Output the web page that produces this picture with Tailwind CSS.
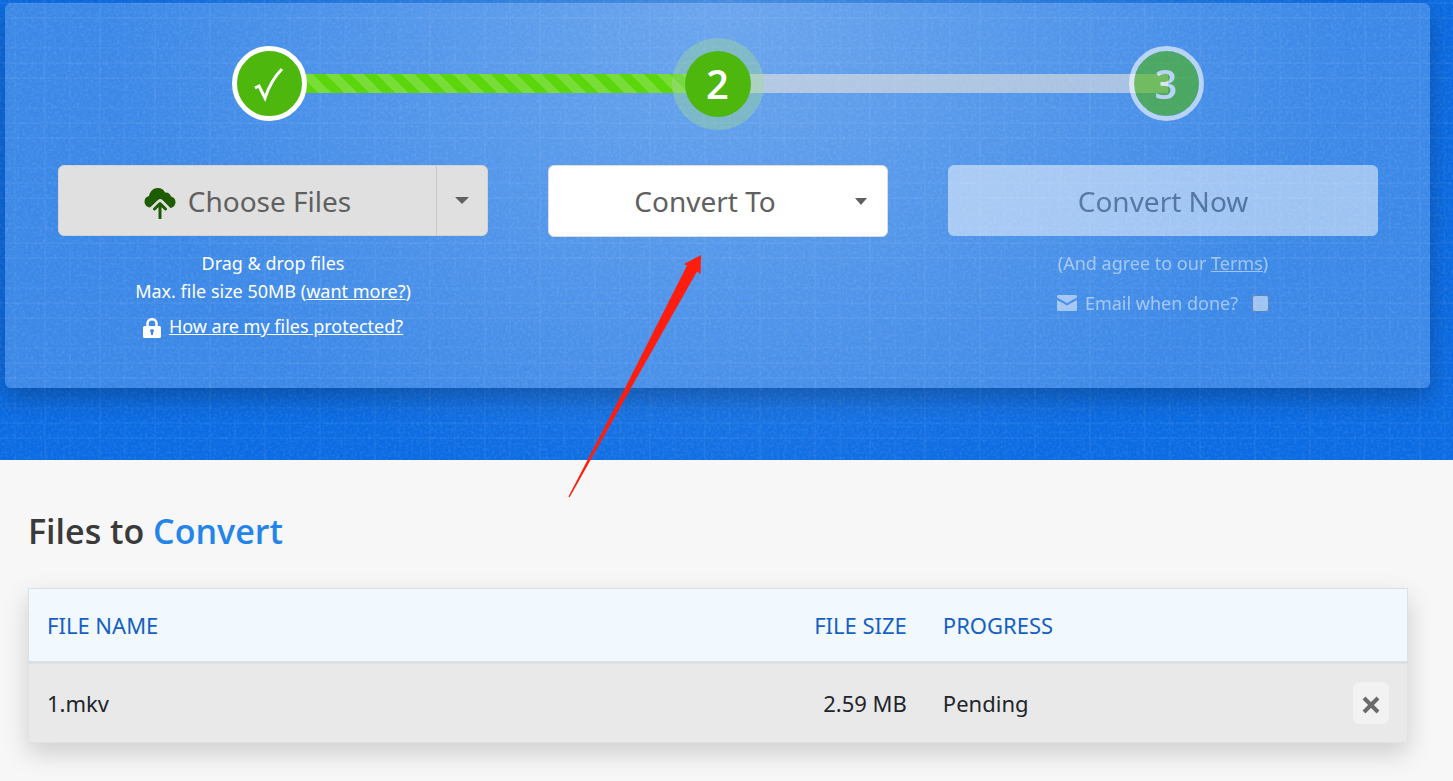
<!DOCTYPE html>
<html lang="en">
<head>
    <meta charset="UTF-8">
    <meta name="viewport" content="width=device-width, initial-scale=1.0">
    <title>File Converter</title>
    <script src="https://cdn.jsdelivr.net/npm/@tailwindcss/browser@4"></script>
</head>
<body class="relative min-h-screen bg-[#f7f7f7] font-['Noto_Sans','Open_Sans',sans-serif] text-[#212529]">
    <!-- Converter -->
    <section class="relative isolate overflow-hidden bg-[#0b6be2] pt-[3px] pr-[23px] pb-[72px] pl-[5px]">
        <!-- Backdrop: glow, grid and grain -->
        <div class="absolute inset-0 -z-10 bg-[radial-gradient(ellipse_620px_520px_at_50%_0%,rgba(255,255,255,0.25),transparent)]"></div>
        <svg class="absolute inset-0 -z-10 h-full w-full" aria-hidden="true">
            <defs>
                <pattern id="grid" x="44" y="17" width="55" height="60" patternUnits="userSpaceOnUse">
                    <path d="M1 0V60M0 1H55M0 46H55" stroke="#fff" stroke-width="2" stroke-opacity=".04" />
                    <path d="M26 0V60M0 31H55" stroke="#fff" stroke-width="2" stroke-opacity=".025" />
                </pattern>
                <filter id="grain" x="0" y="0" width="100%" height="100%">
                    <feTurbulence type="fractalNoise" baseFrequency=".35" numOctaves="2" seed="4" />
                    <feColorMatrix values="0 0 0 0 1  0 0 0 0 1  0 0 0 0 1  .5 0 0 0 -.2" />
                </filter>
            </defs>
            <rect width="100%" height="100%" filter="url(#grain)" opacity=".4" />
            <rect width="100%" height="100%" fill="url(#grid)" />
        </svg>

        <div class="rounded-md bg-white/20 pt-[43px] pb-12 shadow-[0_10px_24px_rgba(0,0,0,0.25)]">
            <!-- Steps -->
            <div class="mx-auto max-w-[972px]">
                <ol class="relative flex items-center justify-between font-['Open_Sans','Noto_Sans',sans-serif] text-[40px] font-semibold text-white">
                    <li class="absolute inset-x-9 h-[19px] bg-[#e8e2de]/60" aria-hidden="true">
                        <div class="h-full w-1/2 bg-[#5bd60c] bg-[repeating-linear-gradient(45deg,rgba(255,255,255,0.18)_0_9px,transparent_9px_18px)]"></div>
                    </li>
                    <li class="relative flex size-[75px] items-center justify-center rounded-full border-[5px] border-white bg-[#4db70d]">
                        <svg class="size-9" viewBox="0 0 36 36" fill="none" stroke="#fff" stroke-width="3" aria-label="Done">
                            <path d="M4 22L8 20L14 32C18 20 22 12 31 3" />
                        </svg>
                    </li>
                    <li class="relative flex size-[66px] items-center justify-center rounded-full bg-[#4db70d] shadow-[0_0_0_13px_rgba(163,219,150,0.4)]">2</li>
                    <li class="relative flex size-[75px] items-center justify-center rounded-full border-[5px] border-white bg-[#4db70d] bg-clip-padding opacity-60">3</li>
                </ol>
            </div>

            <!-- Actions -->
            <div class="mt-11 grid grid-cols-[430fr_340fr_430fr] gap-[60px] pr-[52px] pl-[53px] text-center text-[18px] leading-7 text-white">
                <div>
                    <div class="flex h-[71px] overflow-hidden rounded-md border border-[#d3d3d3] bg-[#e0e0e0] text-[28px] text-[#606060]">
                        <button type="button" class="flex flex-1 items-center justify-center gap-3">
                            <svg class="mt-1 size-8" viewBox="0 0 32 32" aria-hidden="true">
                                <path fill="#1d5c00" d="M6 20.500C2.500 20 .5 17.500.5 14.500c0-3 2-5 4.500-5.500C6 4 9.500 1 13.500 1c4 0 6.500 2 7.500 4.500 3-.5 5.500 1.500 6 4 2.500.5 4.500 2.500 4.500 5.500s-2 5.500-5 6L18.500 13c-1.500-1.500-3-1.500-4.500 0z" />
                                <path fill="none" stroke="#1d5c00" stroke-width="3" stroke-linecap="round" stroke-linejoin="round" d="M16 31V17M10.500 22L16 16.500l5.500 5.500" />
                            </svg>
                            Choose Files
                        </button>
                        <button type="button" class="flex w-[51px] items-center justify-center border-l border-[#c9c9c9]" aria-label="More sources">
                            <svg class="h-[7px] w-[14px]" viewBox="0 0 14 7" fill="#606060"><path d="M0 0h14L7 7z" /></svg>
                        </button>
                    </div>
                    <p class="mt-[13px]">Drag &amp; drop files<br>Max. file size 50MB (<a href="#" class="underline">want more?</a>)</p>
                    <p class="mt-[7px] flex items-center justify-center gap-2">
                        <svg class="mt-1 h-5 w-[18px]" viewBox="0 0 18 20" aria-hidden="true">
                            <path fill="none" stroke="#fff" stroke-width="2.500" d="M4.500 9V5.500a4.500 4.300 0 0 1 9 0V9" />
                            <rect y="8" width="18" height="12" rx="1.500" fill="#fff" />
                            <path fill="#3f88e6" d="M9 11a2 2 0 0 1 1 3.700V17H8v-2.300A2 2 0 0 1 9 11z" />
                        </svg>
                        <a href="#" class="underline">How are my files protected?</a>
                    </p>
                </div>
                <div>
                    <button type="button" class="flex h-[72px] w-full items-center rounded-md border border-[#dcdcdc] bg-white pr-5 pl-[6px] text-[28px] text-[#606060]">
                        <span class="flex-1">Convert To</span>
                        <svg class="h-[7px] w-3" viewBox="0 0 12 7" fill="#606060"><path d="M0 0h12L6 7z" /></svg>
                    </button>
                </div>
                <div class="opacity-50">
                    <button type="button" disabled class="block h-[71px] w-full rounded-md border border-white bg-white text-[28px] text-[#606060]">Convert Now</button>
                    <p class="mt-[13px]">(And agree to our <a href="#" class="underline">Terms</a>)</p>
                    <label class="mt-3 flex items-center justify-center gap-2">
                        <svg class="h-4 w-5" viewBox="0 0 20 16" fill="#fff" aria-hidden="true">
                            <path d="M1.500 0h17Q20 0 20 1.500V2.500L10 8 0 2.500V1.500Q0 0 1.500 0zM0 5l10 5.500L20 5v9.500q0 1.500-1.500 1.500h-17Q0 16 0 14.500z" />
                        </svg>
                        Email when done?
                        <input type="checkbox" class="ml-[6px] size-[17px] appearance-none rounded-[3px] border border-[#808080] bg-white">
                    </label>
                </div>
            </div>
        </div>
    </section>

    <!-- Pointer to the format picker -->
    <svg class="pointer-events-none absolute top-[254px] left-[568px] h-[245px] w-[134px]" viewBox="0 0 134 245" fill="#ff1d10" aria-hidden="true">
        <path d="M133 1L132.500 20L129 17.500L63 134L1.500 243.500L.5 242.500L57 134L119 11.500L116 10z" />
    </svg>

    <!-- Queue -->
    <main class="pr-[45px] pb-[38px] pl-7">
        <h1 class="pt-[47px] font-['Open_Sans','Noto_Sans',sans-serif] text-[34px] leading-12 font-semibold text-[#3a3a3a]">Files to <span class="text-[#2385ea]">Convert</span></h1>
        <table class="mt-[33px] w-full table-fixed text-[22px] leading-8 shadow-[0_10px_24px_rgba(0,0,0,0.17)]">
            <thead class="bg-[#f1f9ff] text-[#1560c4]">
                <tr class="h-[74px] border border-b-[3px] border-[#d8e0e8]">
                    <th class="px-[18px] text-left font-normal">FILE NAME</th>
                    <th class="w-[200px] px-[18px] text-right font-normal">FILE SIZE</th>
                    <th class="w-[35%] px-[18px] text-left font-normal">PROGRESS</th>
                </tr>
            </thead>
            <tbody class="bg-[#e9e9e9]">
                <tr class="h-20 border border-[#e2e2e2]">
                    <td class="px-[18px]">1.mkv</td>
                    <td class="px-[18px] text-right">2.59 MB</td>
                    <td class="px-[18px]">
                        <div class="flex items-center justify-between">
                            Pending
                            <button type="button" class="flex h-[42px] w-9 items-center justify-center rounded-md bg-[#f2f2f2]" aria-label="Remove 1.mkv">
                                <svg class="mt-1 size-[18px]" viewBox="0 0 18 18" stroke="#6b6b6b" stroke-width="4"><path d="M2 2l14 14M16 2L2 16" /></svg>
                            </button>
                        </div>
                    </td>
                </tr>
            </tbody>
        </table>
    </main>
</body>
</html>
